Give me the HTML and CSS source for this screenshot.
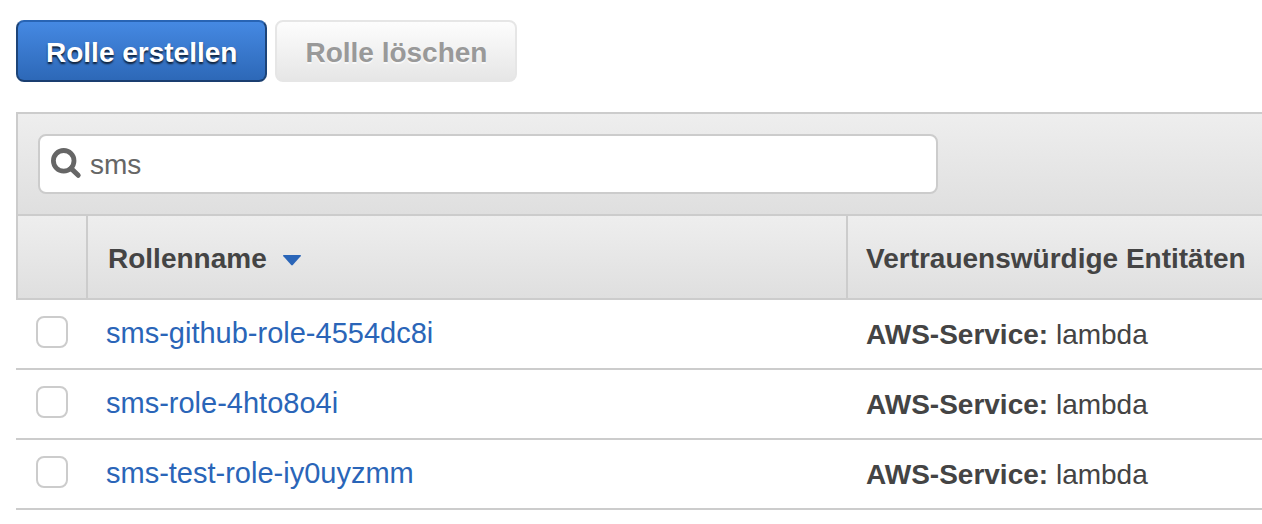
FILE: index.html
```html
<!DOCTYPE html>
<html lang="de">
<head>
<meta charset="utf-8">
<title>Rollen</title>
<link rel="stylesheet" href="styles.css">
</head>
<body>
<div class="actions">
  <button class="button button-primary" type="button">Rolle erstellen</button>
  <button class="button button-secondary" type="button" disabled>Rolle löschen</button>
</div>
<main class="panel">
  <div class="filter">
    <label class="search">
      <svg class="search-icon" viewBox="0 0 32 32" aria-hidden="true">
        <circle cx="13.7" cy="12.8" r="10.3" fill="none" stroke="#666" stroke-width="4.8"/>
        <path d="M21 20.4L28.2 27.3" fill="none" stroke="#666" stroke-width="5" stroke-linecap="round"/>
      </svg>
      <input class="search-input" type="text" value="sms" aria-label="Suchen">
    </label>
  </div>
  <table class="roles">
    <thead>
      <tr>
        <th class="col-select"></th>
        <th class="col-name" scope="col"><span class="sort">Rollenname<svg class="sort-icon" viewBox="0 0 18 11" aria-hidden="true"><path d="M0.5 0H17.5Q18.3 0.5 17.6 1.3L9.8 10Q9 10.8 8.2 10L0.4 1.3Q-0.3 0.5 0.5 0Z" fill="#2a65b8"/></svg></span></th>
        <th class="col-entities" scope="col">Vertrauenswürdige Entitäten</th>
      </tr>
    </thead>
    <tbody>
      <tr>
        <td class="cell-select"><input class="check" type="checkbox" aria-label="sms-github-role-4554dc8i"></td>
        <td class="cell-name"><a class="role-link" href="#">sms-github-role-4554dc8i</a></td>
        <td class="cell-entities"><strong>AWS-Service:</strong> lambda</td>
      </tr>
      <tr>
        <td class="cell-select"><input class="check" type="checkbox" aria-label="sms-role-4hto8o4i"></td>
        <td class="cell-name"><a class="role-link" href="#">sms-role-4hto8o4i</a></td>
        <td class="cell-entities"><strong>AWS-Service:</strong> lambda</td>
      </tr>
      <tr>
        <td class="cell-select"><input class="check" type="checkbox" aria-label="sms-test-role-iy0uyzmm"></td>
        <td class="cell-name"><a class="role-link" href="#">sms-test-role-iy0uyzmm</a></td>
        <td class="cell-entities"><strong>AWS-Service:</strong> lambda</td>
      </tr>
    </tbody>
  </table>
</main>
</body>
</html>
```

FILE: styles.css
```css
* {
  box-sizing: border-box;
}

body {
  margin: 0;
  padding: 20px 0 14px 16px;
  background: #fff;
  color: #444;
  font-family: "Liberation Sans", Arial, sans-serif;
  font-size: 28px;
  line-height: 34px;
}

.actions {
  display: flex;
  gap: 8px;
  margin-bottom: 30px;
}

.button {
  padding: 14px 28px 10px;
  border: 2px solid;
  border-radius: 8px;
  font: inherit;
  font-weight: bold;
  white-space: nowrap;
}

.button-primary {
  border-color: #2864b4 #1d4478 #1a3e70;
  background: linear-gradient(#468ae4, #2c67b6);
  background-origin: border-box;
  color: #fff;
  text-shadow: 0 2px 2px rgba(0, 0, 0, 0.75);
}

.button-secondary {
  border-color: #e6e6e6;
  background: linear-gradient(#fdfdfd, #e6e6e6);
  color: #999;
  text-shadow: 0 2px 0 #f8f8f8;
}

.filter {
  padding: 20px;
  border: solid #ccc;
  border-width: 2px 0 0 2px;
  background: linear-gradient(#eee, #dfdfdf);
}

.search {
  display: flex;
  gap: 8px;
  max-width: 900px;
  padding: 12px 10px 10px;
  border: 2px solid #ccc;
  border-radius: 8px;
  background: #fff;
}

.search-icon {
  flex: none;
  width: 32px;
  height: 32px;
}

.search-input {
  flex: 1;
  min-width: 0;
  height: 34px;
  padding: 0;
  border: 0;
  outline: 0;
  background: transparent;
  color: #666;
  font: inherit;
}

.roles {
  width: 100%;
  border-collapse: separate;
  border-spacing: 0;
  table-layout: fixed;
}

.roles th {
  padding: 26px 0 22px 18px;
  border: solid #ccc;
  border-width: 2px 0 2px 2px;
  background: linear-gradient(#eee, #dfdfdf);
  text-align: left;
  white-space: nowrap;
}

.roles .col-select {
  width: 70px;
}

.roles .col-name {
  width: 61%;
  padding-left: 20px;
}

.sort {
  display: flex;
  align-items: center;
  gap: 16px;
}

.sort-icon {
  width: 18px;
  height: 11px;
  margin-top: 2px;
}

.roles td {
  padding: 16px 0 18px 20px;
  border-bottom: 2px solid #ccc;
  vertical-align: top;
  white-space: nowrap;
}

.roles .cell-name {
  font-size: 29px;
}

.roles .cell-entities {
  padding-top: 18px;
  padding-bottom: 16px;
}

.check {
  display: block;
  width: 32px;
  height: 32px;
  margin: 0;
  border: 2px solid #ccc;
  border-radius: 8px;
  background: #fff;
  appearance: none;
}

.check:checked {
  background: #2a65b8;
}

.role-link {
  color: #2a65b8;
  text-decoration: none;
}
```
